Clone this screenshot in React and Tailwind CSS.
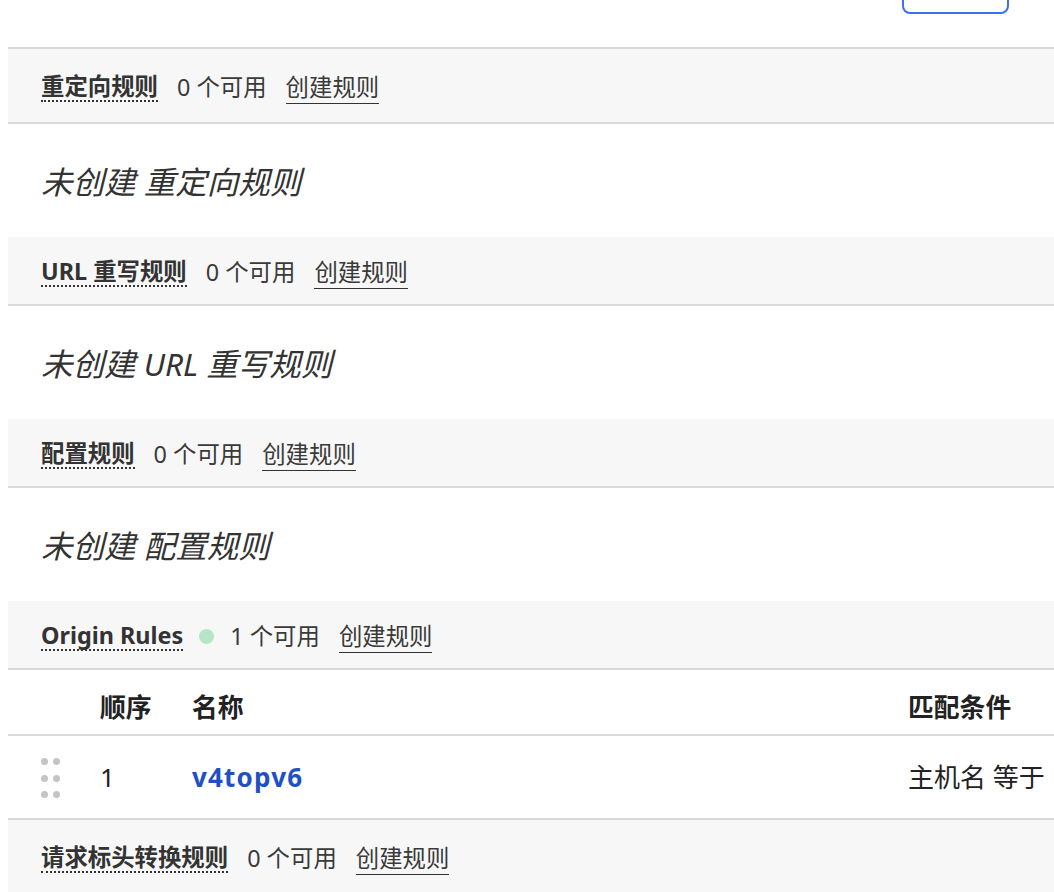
import React from 'react';

const font = { fontFamily: '"Noto Sans", "Noto Sans CJK SC", sans-serif' };

function SectionHeader({ title, count, dot, first, last }) {
  let size = 'h-[69px] pt-[3px]';
  if (first) size = 'border-t-2 h-[77px] pt-[4px]';
  if (last) size = 'h-[76px] pt-[2px]';
  return (
    <div
      className={
        'flex items-center gap-[19px] bg-[#f7f7f7] border-b-2 border-[#d9d9d9] pl-[33px] ' + size
      }
    >
      <span className="text-[23.4px] leading-[27px] font-bold text-[#333] border-b-2 border-dotted border-[#333]">
        {title}
      </span>
      {dot && <span className="-mx-[3px] w-[15px] h-[15px] rounded-full bg-[#b6e6c7]" />}
      <span className="text-[23.4px] leading-[27px] text-[#3a3a3a]">{count} 个可用</span>
      <span className="text-[23.4px] leading-[27px] text-[#3a3a3a] border-b-[1.5px] border-[#333] pb-[2px] mt-[3px]">
        创建规则
      </span>
    </div>
  );
}

function Empty({ text }) {
  return (
    <div className="h-[113px] flex items-center pl-[33px] pt-[2px]">
      <span className="italic text-[31.5px] text-[#333]">{text}</span>
    </div>
  );
}

function DragHandle() {
  return (
    <div className="grid grid-cols-2 gap-x-[5px] gap-y-[9.5px] w-[19px]">
      {[0, 1, 2, 3, 4, 5].map(i => (
        <span key={i} className="w-[7px] h-[7px] rounded-full bg-[#c4c4c4]" />
      ))}
    </div>
  );
}

export default function App() {
  return (
    <div className="w-[1054px] h-[892px] overflow-hidden bg-white" style={font}>
      <div className="w-[1300px] pl-[8px]">
        <div className="flex items-start h-[47px] pl-[894px] overflow-hidden">
          <div className="shrink-0 w-[107px] h-[40px] -mt-[26px] border-2 border-[#3d70ee] rounded-lg" />
        </div>

        <SectionHeader title="重定向规则" count={0} first />
        <Empty text="未创建 重定向规则" />

        <SectionHeader title="URL 重写规则" count={0} />
        <Empty text="未创建 URL 重写规则" />

        <SectionHeader title="配置规则" count={0} />
        <Empty text="未创建 配置规则" />

        <SectionHeader title="Origin Rules" count={1} dot />

        <div className="grid grid-cols-[92px_92px_716px_1fr] items-center h-[66px] border-b-2 border-[#d9d9d9] pt-[10px] text-[25.8px] font-bold text-[#222]">
          <span />
          <span>顺序</span>
          <span>名称</span>
          <span>匹配条件</span>
        </div>

        <div className="grid grid-cols-[92px_92px_716px_1fr] items-center h-[84px] border-b-2 border-[#d9d9d9] text-[26px] text-[#222]">
          <div className="pl-[33px] pt-[2px]">
            <DragHandle />
          </div>
          <span>1</span>
          <span className="font-bold text-[#1f50c4] tracking-[1.2px]">v4topv6</span>
          <span className="whitespace-nowrap">主机名 等于</span>
        </div>

        <SectionHeader title="请求标头转换规则" count={0} last />
      </div>
    </div>
  );
}
